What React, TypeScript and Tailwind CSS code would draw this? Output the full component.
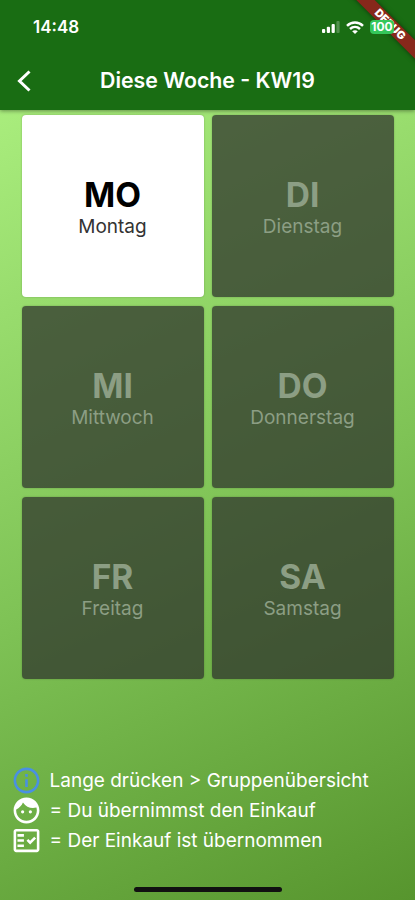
import { MdFace, MdInfoOutline, MdOutlineFactCheck } from 'react-icons/md';

const days = [
  { short: 'MO', name: 'Montag', active: true },
  { short: 'DI', name: 'Dienstag' },
  { short: 'MI', name: 'Mittwoch' },
  { short: 'DO', name: 'Donnerstag' },
  { short: 'FR', name: 'Freitag' },
  { short: 'SA', name: 'Samstag' },
];

export default function App() {
  return (
    <div className="relative flex h-[900px] w-[415px] flex-col overflow-hidden bg-[linear-gradient(155deg,#b2f685_0%,#7ec255_58%,#57952e_100%)] font-['Inter','Liberation_Sans',sans-serif]">
      <header className="relative z-10 h-[110px] shrink-0 bg-[#196d13] text-white shadow-[0_1px_4px_rgba(0,0,0,0.4)]">
        <DebugBanner />
        <StatusBar />
        <div className="flex h-[54px] items-center">
          <div className="w-[48px] pb-px pl-[16px]">
            <BackIcon />
          </div>
          <h1 className="flex-1 pr-[48px] text-center text-[21.3px] font-semibold leading-none">
            Diese Woche - KW19
          </h1>
        </div>
      </header>

      <main className="grid grid-cols-2 gap-x-[8px] gap-y-[9px] px-[21.5px] pt-[5px]">
        {days.map((day) => (
          <DayCard key={day.short} {...day} />
        ))}
      </main>

      {/* Legende */}
      <footer className="mt-auto flex flex-col gap-[3px] pb-[46px] pl-[10.500px] text-[19px] leading-[27px] text-white">
        <div className="flex h-[27px] items-center gap-[8px]">
          <MdInfoOutline size={31} className="text-[#4a90e2]" />
          <span>Lange drücken &gt; Gruppenübersicht</span>
        </div>
        <div className="flex h-[27px] items-center gap-[8px]">
          <MdFace size={31} />
          <span>= Du übernimmst den Einkauf</span>
        </div>
        <div className="flex h-[27px] items-center gap-[8px]">
          <MdOutlineFactCheck size={31} />
          <span>= Der Einkauf ist übernommen</span>
        </div>
      </footer>

      <div className="absolute bottom-[8px] left-[134px] h-[5px] w-[148px] rounded-full bg-[#111]" />
    </div>
  );
}

function DayCard({ short, name, active }: { short: string; name: string; active?: boolean }) {
  return (
    <div
      className={`flex h-[182px] flex-col items-center justify-center rounded-[4px] pt-[5px] shadow-[0_0_2px_rgba(0,0,0,0.25)] ${
        active ? 'bg-white text-black' : 'bg-[#30352d]/75 text-[#8c9e84]'
      }`}
    >
      <div className="text-[33.5px] font-bold leading-[36px]">{short}</div>
      <div className={`text-[19px] leading-[27px] ${active ? 'text-[#333]' : ''}`}>{name}</div>
    </div>
  );
}

function BackIcon() {
  return (
    <svg width="15" height="22" viewBox="0 0 15 22" fill="none" stroke="#fff" strokeWidth="3">
      <path d="M13.500 1.500 3.500 11l10 9.500" />
    </svg>
  );
}

function StatusBar() {
  return (
    <div className="relative flex h-[54px] items-center justify-between pl-[33px] pr-[21px]">
      <span className="text-[17px] font-semibold leading-none">14:48</span>
      <div className="flex items-center gap-[6px]">
        <svg width="18" height="12" viewBox="0 0 18 12" fill="#fff">
          <rect x="0" y="8" width="3.2" height="4" rx="1" />
          <rect x="4.8" y="5.8" width="3.2" height="6.2" rx="1" />
          <rect x="9.6" y="3" width="3.2" height="9" rx="1" />
          <rect x="14.4" y="0" width="3.2" height="12" rx="1" opacity="0.25" />
        </svg>
        <svg width="18" height="13" viewBox="0 0 18 13" fill="none" stroke="#fff" strokeWidth="2.5">
          <path d="M1 4.8C5.5.5 12.500.5 17 4.800" />
          <path d="M4 8c3-2.700 7-2.700 10 0" />
          <path d="M9 13 6.200 10.300c1.500-1.300 4.100-1.300 5.600 0z" fill="#fff" stroke="none" />
        </svg>
        <div className="h-[14px] w-[24px] rounded-[4px] bg-[#35c75a] text-center text-[12px] font-bold leading-[14px]">
          100
        </div>
      </div>
    </div>
  );
}

function DebugBanner() {
  return (
    <div className="absolute right-0 top-0 h-[70px] w-[70px] overflow-hidden">
      <div className="absolute left-[-15px] top-[18px] h-[13px] w-[120px] rotate-45 bg-[#87281b] text-center text-[11px] font-black leading-[13px] shadow-[0_0_5px_rgba(0,0,0,0.5)]">
        DEBUG
      </div>
    </div>
  );
}
